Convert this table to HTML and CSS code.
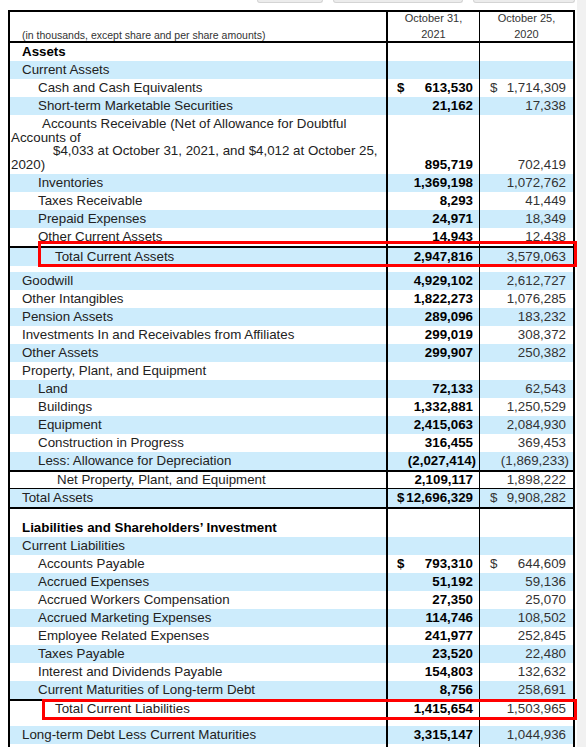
FILE: index.html
```html
<!DOCTYPE html>
<html>
<head>
<meta charset="utf-8">
<link rel="stylesheet" href="styles.css">
</head>
<body>
<div class="page">
  <main class="main">
    <div class="toolbar">
      <div class="tab t1"></div>
      <div class="tab t2"></div>
      <div class="tab t3"></div>
    </div>
    <div class="sheet-wrap">
      <table class="sheet">
        <tr class="head">
          <td class="c1 note">(in thousands, except share and per share amounts)</td>
          <td class="c2 date"><div class="date-in">October 31,<br>2021</div></td>
          <td class="c3 date"><div class="date-in">October 25,<br>2020</div></td>
        </tr>
        <tr class="top2"><td class="c1 l0 bold">Assets</td><td class="c2"></td><td class="c3"></td></tr>
        <tr class="b"><td class="c1 l0">Current Assets</td><td class="c2"></td><td class="c3"></td></tr>
        <tr><td class="c1 l1">Cash and Cash Equivalents</td><td class="c2 n"><div class="amt"><span>$</span><span>613,530</span></div></td><td class="c3 n"><div class="amt"><span>$</span><span>1,714,309</span></div></td></tr>
        <tr class="b"><td class="c1 l1">Short-term Marketable Securities</td><td class="c2 n">21,162</td><td class="c3 n">17,338</td></tr>
        <tr class="ar"><td class="c1 wrap">Accounts Receivable (Net of Allowance for Doubtful Accounts of<br><span class="ind"></span>$4,033 at October 31, 2021, and $4,012 at October 25, 2020)</td><td class="c2 n">895,719</td><td class="c3 n">702,419</td></tr>
        <tr class="b"><td class="c1 l1">Inventories</td><td class="c2 n">1,369,198</td><td class="c3 n">1,072,762</td></tr>
        <tr><td class="c1 l1">Taxes Receivable</td><td class="c2 n">8,293</td><td class="c3 n">41,449</td></tr>
        <tr class="b"><td class="c1 l1">Prepaid Expenses</td><td class="c2 n">24,971</td><td class="c3 n">18,349</td></tr>
        <tr><td class="c1 l1">Other Current Assets</td><td class="c2 n">14,943</td><td class="c3 n">12,438</td></tr>
        <tr class="b top2"><td class="c1 l2">Total Current Assets</td><td class="c2 n">2,947,816</td><td class="c3 n">3,579,063</td></tr>
        <tr class="gap g6"><td class="c1"></td><td class="c2"></td><td class="c3"></td></tr>
        <tr class="b"><td class="c1 l0">Goodwill</td><td class="c2 n">4,929,102</td><td class="c3 n">2,612,727</td></tr>
        <tr><td class="c1 l0">Other Intangibles</td><td class="c2 n">1,822,273</td><td class="c3 n">1,076,285</td></tr>
        <tr class="b"><td class="c1 l0">Pension Assets</td><td class="c2 n">289,096</td><td class="c3 n">183,232</td></tr>
        <tr><td class="c1 l0">Investments In and Receivables from Affiliates</td><td class="c2 n">299,019</td><td class="c3 n">308,372</td></tr>
        <tr class="b"><td class="c1 l0">Other Assets</td><td class="c2 n">299,907</td><td class="c3 n">250,382</td></tr>
        <tr><td class="c1 l0">Property, Plant, and Equipment</td><td class="c2"></td><td class="c3"></td></tr>
        <tr class="b"><td class="c1 l1">Land</td><td class="c2 n">72,133</td><td class="c3 n">62,543</td></tr>
        <tr><td class="c1 l1">Buildings</td><td class="c2 n">1,332,881</td><td class="c3 n">1,250,529</td></tr>
        <tr class="b"><td class="c1 l1">Equipment</td><td class="c2 n">2,415,063</td><td class="c3 n">2,084,930</td></tr>
        <tr><td class="c1 l1">Construction in Progress</td><td class="c2 n">316,455</td><td class="c3 n">369,453</td></tr>
        <tr class="b"><td class="c1 l1">Less: Allowance for Depreciation</td><td class="c2 n neg">(2,027,414)</td><td class="c3 n neg">(1,869,233)</td></tr>
        <tr class="top2 short"><td class="c1 l3">Net Property, Plant, and Equipment</td><td class="c2 n">2,109,117</td><td class="c3 n">1,898,222</td></tr>
        <tr class="b top1"><td class="c1 l0">Total Assets</td><td class="c2 n"><div class="amt"><span>$</span><span>12,696,329</span></div></td><td class="c3 n"><div class="amt"><span>$</span><span>9,908,282</span></div></td></tr>
        <tr class="gap g11 top2"><td class="c1"></td><td class="c2"></td><td class="c3"></td></tr>
        <tr><td class="c1 l0 bold">Liabilities and Shareholders’ Investment</td><td class="c2"></td><td class="c3"></td></tr>
        <tr class="b"><td class="c1 l0">Current Liabilities</td><td class="c2"></td><td class="c3"></td></tr>
        <tr><td class="c1 l1">Accounts Payable</td><td class="c2 n"><div class="amt"><span>$</span><span>793,310</span></div></td><td class="c3 n"><div class="amt"><span>$</span><span>644,609</span></div></td></tr>
        <tr class="b"><td class="c1 l1">Accrued Expenses</td><td class="c2 n">51,192</td><td class="c3 n">59,136</td></tr>
        <tr><td class="c1 l1">Accrued Workers Compensation</td><td class="c2 n">27,350</td><td class="c3 n">25,070</td></tr>
        <tr class="b"><td class="c1 l1">Accrued Marketing Expenses</td><td class="c2 n">114,746</td><td class="c3 n">108,502</td></tr>
        <tr><td class="c1 l1">Employee Related Expenses</td><td class="c2 n">241,977</td><td class="c3 n">252,845</td></tr>
        <tr class="b"><td class="c1 l1">Taxes Payable</td><td class="c2 n">23,520</td><td class="c3 n">22,480</td></tr>
        <tr><td class="c1 l1">Interest and Dividends Payable</td><td class="c2 n">154,803</td><td class="c3 n">132,632</td></tr>
        <tr class="b"><td class="c1 l1">Current Maturities of Long-term Debt</td><td class="c2 n">8,756</td><td class="c3 n">258,691</td></tr>
        <tr class="top2 tcl"><td class="c1 l2">Total Current Liabilities</td><td class="c2 n">1,415,654</td><td class="c3 n">1,503,965</td></tr>
        <tr class="gap g9"><td class="c1"></td><td class="c2"></td><td class="c3"></td></tr>
        <tr class="b"><td class="c1 l0">Long-term Debt Less Current Maturities</td><td class="c2 n">3,315,147</td><td class="c3 n">1,044,936</td></tr>
        <tr><td class="c1"></td><td class="c2"></td><td class="c3"></td></tr>
      </table>
      <div class="highlight h1"></div>
      <div class="highlight h2"></div>
    </div>
  </main>
  <div class="scroll"></div>
</div>
</body>
</html>
```

FILE: styles.css
```css
html, body {
  margin: 0;
  padding: 0;
  overflow: hidden;
  background: #fff;
}

.page {
  display: flex;
  width: 586px;
  height: 747px;
  font-family: "Liberation Sans", Arial, sans-serif;
  color: #222;
}

.main {
  width: 577px;
  padding-left: 8px;
  box-sizing: border-box;
  overflow: hidden;
}

.scroll {
  flex: 1;
  background: #f1f1f1;
}

.toolbar {
  display: flex;
  height: 10px;
  padding-left: 249px;
  gap: 10px;
}

.tab {
  height: 2px;
  background: #ececec;
  border: 1px solid #d4d4d4;
  border-top: none;
  border-radius: 0 0 3px 3px;
}
.t1 { width: 64px; }
.t2 { width: 128px; }
.t3 { width: 100px; }

.sheet-wrap {
  position: relative;
}

.sheet {
  width: 567px;
  table-layout: fixed;
  border-collapse: separate;
  border-spacing: 0;
  border: 2px solid #000;
  font-size: 13.33px;
  line-height: 14px;
}

.sheet td {
  box-sizing: border-box;
  padding: 2px 0;
  white-space: nowrap;
  overflow: hidden;
  vertical-align: middle;
}

.sheet td.c1 { width: 378px; border-right: 2px solid #000; }
.sheet td.c2 { width: 92px; border-right: 1px solid #000; }
.sheet td.c3 { width: 93px; }

.sheet tr.b td { background: #cdecfc; }

.sheet tr.top2 td { border-top: 2px solid #000; }
.sheet tr.top1 td { border-top: 1px solid #000; }

.head td {
  height: 29px;
  padding: 0;
}
.head .note {
  vertical-align: bottom;
  font-size: 10.5px;
  line-height: 12px;
  padding-left: 12px;
  color: #333;
}
.head .date {
  vertical-align: top;
  text-align: center;
  font-size: 11px;
  color: #333;
}
.date-in {
  line-height: 16px;
  height: 27px;
  margin-top: -2px;
}

.l0 { padding-left: 12px !important; }
.l1 { padding-left: 28px !important; }
.l2 { padding-left: 45px !important; }
.l3 { padding-left: 47px !important; }
.bold { font-weight: bold; color: #000; }

.sheet td.wrap {
  white-space: normal;
  line-height: 13.7px;
  padding: 2px 2px 2px 1px;
  text-indent: 31px;
}
.ind {
  display: inline-block;
  width: 42px;
}
.ar td { vertical-align: bottom; line-height: 13.7px; }

.sheet td.n { text-align: right; }
.sheet td.c2.n {
  font-weight: bold;
  color: #000;
  padding-right: 6px;
  padding-left: 9px;
}
.sheet td.c3.n {
  color: #333;
  padding-right: 7px;
  padding-left: 10px;
}
.sheet td.c2.neg { padding-right: 3px; }
.sheet td.c3.neg { padding-right: 4px; }

.amt {
  display: flex;
  justify-content: space-between;
}

.short td { padding: 1px 0 !important; line-height: 14px; }
.tcl td { padding: 1px 0 !important; }
.sheet .short td.c2.n,
.sheet .tcl td.c2.n { padding: 1px 6px 1px 9px !important; }
.sheet .short td.c3.n,
.sheet .tcl td.c3.n { padding: 1px 7px 1px 10px !important; }
.sheet .short td.l3 { padding-left: 47px !important; }
.sheet .tcl td.l2 { padding-left: 45px !important; }

.gap td { padding: 0; line-height: 0; font-size: 0; }
.g6 td { height: 6px; }
.g9 td { height: 9px; }
.g11 td { height: 12px; }

.highlight {
  position: absolute;
  border: 3px solid #f00;
  box-sizing: border-box;
}
.h1 { left: 30px; top: 231px; width: 539px; height: 26px; }
.h2 { left: 34px; top: 689px; width: 535px; height: 21px; }
```
